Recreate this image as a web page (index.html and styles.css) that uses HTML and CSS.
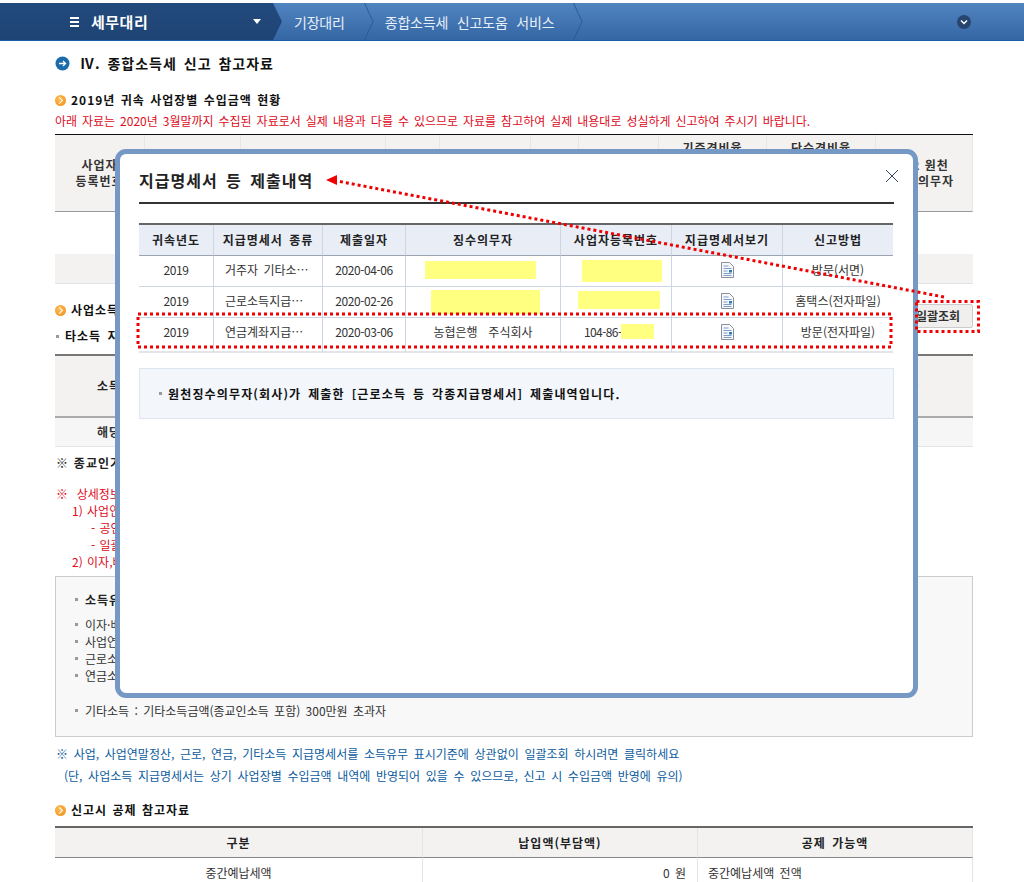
FILE: index.html
```html
<!DOCTYPE html>
<html lang="ko">
<head>
<meta charset="utf-8">
<title>종합소득세 신고도움 서비스</title>
<link rel="stylesheet" href="styles.css">
</head>
<body>
<header class="topbar">
  <div class="brand">
    <svg class="menu-icon" width="9" height="10" viewBox="0 0 9 10"><path d="M0 0h9v2H0zM0 4h9v2H0zM0 8h9v2H0z" fill="#fff"/></svg>
    <span class="brand-name">세무대리</span>
    <svg class="caret" width="8" height="5" viewBox="0 0 8 5"><path d="M0 0h8L4 5z" fill="#fff"/></svg>
  </div>
  <svg class="brand-tip" width="10" height="37" viewBox="0 0 10 37"><defs><linearGradient id="dk" x1="0" y1="0" x2="0" y2="1"><stop offset="0" stop-color="#234a7c"/><stop offset="1" stop-color="#1d4474"/></linearGradient></defs><path d="M0 0l9 18.5L0 37z" fill="url(#dk)"/></svg>
  <span class="crumb crumb-first">기장대리</span>
  <svg class="sep" width="10" height="37" viewBox="0 0 10 37"><path d="M0.5 0l8.5 18.5L0.5 37" fill="none" stroke="#2d5b95"/></svg>
  <span class="crumb">종합소득세 신고도움 서비스</span>
  <svg class="sep" width="10" height="37" viewBox="0 0 10 37"><path d="M0.5 0l8.5 18.5L0.5 37" fill="none" stroke="#2d5b95"/></svg>
  <svg class="more" width="16" height="16" viewBox="0 0 16 16"><circle cx="8" cy="8" r="7" fill="#27466f"/><path d="M5 6.5l3 3 3-3" fill="none" stroke="#fff" stroke-width="1.4"/></svg>
</header>

<main class="page">
  <h1 class="page-title">
    <svg width="15" height="15" viewBox="0 0 15 15"><circle cx="7.5" cy="7.5" r="7" fill="#1c6cab"/><path d="M4 7.5h6M8 5l2.5 2.5L8 10" fill="none" stroke="#fff" stroke-width="1.3"/></svg>
    <span>Ⅳ. 종합소득세 신고 참고자료</span>
  </h1>

  <h2 class="sub-title first-sub"><i class="dot"></i>2019년 귀속 사업장별 수입금액 현황</h2>
  <p class="warn">아래 자료는 2020년 3월말까지 수집된 자료로서 실제 내용과 다를 수 있으므로 자료를 참고하여 실제 내용대로 성실하게 신고하여 주시기 바랍니다.</p>

  <table class="grid t1">
    <colgroup><col class="a1"><col class="a2"><col class="a3"><col class="a4"><col class="a5"><col class="a6"><col class="a7"><col class="a8"><col class="a9"><col class="a10"></colgroup>
    <thead>
      <tr>
        <th>사업자<br>등록번호</th><th></th><th></th><th></th><th></th><th></th><th></th>
        <th class="top">기준경비율</th><th class="top">단순경비율</th><th class="tight">※2 원천<br>징수의무자</th>
      </tr>
    </thead>
    <tbody>
      <tr class="r-blank"><td colspan="10"></td></tr>
      <tr class="r-total"><td colspan="10"></td></tr>
    </tbody>
  </table>

  <div class="section-row">
    <h2 class="sub-title section-title"><i class="dot"></i>사업소득 지급</h2>
    <button class="btn" type="button">일괄조회</button>
  </div>
  <h3 class="bullet-title"><i class="sq"></i>타소득 지급</h3>

  <table class="grid t2">
    <colgroup><col class="b1"><col class="b2"><col class="b3"></colgroup>
    <thead><tr><th>소득구분</th><th></th><th>원천징수의무자</th></tr></thead>
    <tbody><tr><td class="strong">해당없음</td><td></td><td></td></tr></tbody>
  </table>

  <p class="religion">※ 종교인기타소득</p>
  <div class="red-notes">
    <p>※&nbsp; 상세정보</p>
    <p class="lv1">1) 사업연말정산</p>
    <p class="lv2">- 공인인증</p>
    <p class="lv2">- 일괄조회</p>
    <p class="lv1">2) 이자,배당</p>
  </div>

  <section class="info-box">
    <p class="info-head"><i class="sq"></i>소득유무</p>
    <p class="info"><i class="sq"></i>이자·배당</p>
    <p class="info"><i class="sq"></i>사업연말</p>
    <p class="info"><i class="sq"></i>근로소득</p>
    <p class="info"><i class="sq"></i>연금소득</p>
    <p class="info info-last"><i class="sq"></i>기타소득 : 기타소득금액(종교인소득 포함) 300만원 초과자</p>
  </section>

  <div class="blue-notes">
    <p>※ 사업, 사업연말정산, 근로, 연금, 기타소득 지급명세서를 소득유무 표시기준에 상관없이 일괄조회 하시려면 클릭하세요</p>
    <p class="indent">(단, 사업소득 지급명세서는 상기 사업장별 수입금액 내역에 반영되어 있을 수 있으므로, 신고 시 수입금액 반영에 유의)</p>
  </div>

  <h2 class="sub-title last-sub"><i class="dot"></i>신고시 공제 참고자료</h2>
  <table class="grid t3">
    <colgroup><col class="c1"><col class="c2"><col class="c3"></colgroup>
    <thead><tr><th>구분</th><th>납입액(부담액)</th><th>공제 가능액</th></tr></thead>
    <tbody><tr><td>중간예납세액</td><td class="num">0 원</td><td class="lft">중간예납세액 전액</td></tr></tbody>
  </table>
</main>

<div class="modal" role="dialog">
  <div class="modal-head">
    <h2>지급명세서 등 제출내역</h2>
    <svg class="close" width="14" height="14" viewBox="0 0 14 14"><path d="M1 1l12 12M13 1L1 13" fill="none" stroke="#33435f" stroke-width="1"/></svg>
  </div>
  <table class="list">
    <colgroup><col class="m1"><col class="m2"><col class="m3"><col class="m4"><col class="m5"><col class="m6"><col class="m7"></colgroup>
    <thead>
      <tr><th>귀속년도</th><th>지급명세서 종류</th><th>제출일자</th><th>징수의무자</th><th>사업자등록번호</th><th>지급명세서보기</th><th>신고방법</th></tr>
    </thead>
    <tbody>
      <tr><td class="d">2019</td><td class="lft">거주자 기타소…</td><td class="d">2020-04-06</td><td></td><td></td><td><svg class="doc" width="13" height="16" viewBox="0 0 13 16"><path d="M.5.5h8l4 4v11H.5z" fill="#f6f8fb" stroke="#8b8f96"/><path d="M2.5 4h5M2.5 6.500h8M2.500 9h4M2.500 11.500h8M2.500 13.500h8" stroke="#7d9cc6"/><path d="M8 8h3v2.500H8z" fill="#2f7ac0"/></svg></td><td>방문(서면)</td></tr>
      <tr><td class="d">2019</td><td class="lft">근로소득지급…</td><td class="d">2020-02-26</td><td></td><td></td><td><svg class="doc" width="13" height="16" viewBox="0 0 13 16"><path d="M.5.5h8l4 4v11H.5z" fill="#f6f8fb" stroke="#8b8f96"/><path d="M2.5 4h5M2.5 6.500h8M2.500 9h4M2.500 11.500h8M2.500 13.500h8" stroke="#7d9cc6"/><path d="M8 8h3v2.500H8z" fill="#2f7ac0"/></svg></td><td>홈택스(전자파일)</td></tr>
      <tr><td class="d">2019</td><td class="lft">연금계좌지급…</td><td class="d">2020-03-06</td><td>농협은행 &nbsp;주식회사</td><td class="biz">104-86-00000</td><td><svg class="doc" width="13" height="16" viewBox="0 0 13 16"><path d="M.5.5h8l4 4v11H.5z" fill="#f6f8fb" stroke="#8b8f96"/><path d="M2.5 4h5M2.5 6.500h8M2.500 9h4M2.500 11.500h8M2.500 13.500h8" stroke="#7d9cc6"/><path d="M8 8h3v2.500H8z" fill="#2f7ac0"/></svg></td><td>방문(전자파일)</td></tr>
    </tbody>
  </table>
  <div class="modal-note"><i class="sq"></i>원천징수의무자(회사)가 제출한 [근로소득 등 각종지급명세서] 제출내역입니다.</div>
</div>

<svg class="marks" width="1024" height="882" viewBox="0 0 1024 882">
  <g fill="#ffff80">
    <rect x="425" y="261" width="111" height="18"/>
    <rect x="582" y="260" width="80" height="22"/>
    <rect x="431" y="290" width="109" height="24"/>
    <rect x="578" y="291" width="82" height="18"/>
    <rect x="621" y="324" width="33" height="15"/>
  </g>
  <g fill="none" stroke="#f00000" stroke-width="3" stroke-dasharray="3 3">
    <rect x="138" y="314" width="753" height="33"/>
    <rect x="916.500" y="301.500" width="62" height="30"/>
    <path d="M944 297L337 181"/>
  </g>
  <path d="M326 180l11-5v10z" fill="#f00000"/>
</svg>
</body>
</html>
```

FILE: styles.css
```css
* { box-sizing: border-box; }
html { overflow: hidden; }
body {
  margin: 0;
  position: relative;
  background: #fff;
  color: #222;
  font: 12px/16px "Noto Sans CJK KR", "Noto Sans", sans-serif;
  word-spacing: 2px;
}
p, h1, h2, h3 { margin: 0; }
i { font-style: normal; }

/* top bar */
.topbar {
  margin-top: 3px;
  height: 38px;
  display: flex;
  align-items: center;
  background: linear-gradient(#5084bf, #3566a5);
  border-bottom: 1px solid #1d5ca6;
  color: #e8f0f9;
  position: relative;
}
.brand {
  width: 273px;
  height: 37px;
  display: flex;
  align-items: center;
  padding-left: 70px;
  background: linear-gradient(#234a7c, #1d4474);
  color: #fff;
}
.brand-name { margin-left: 12px; font-size: 15px; font-weight: 700; width: 162px; letter-spacing: .5px; }
.menu-icon, .brand-tip, .sep { flex: none; }
.crumb { font-size: 14px; letter-spacing: -.2px; word-spacing: 5px; padding: 0 19px 0 11px; white-space: nowrap; }
.more { margin-left: auto; margin-right: 52px; }

/* page */
.page { padding: 12px 51px 0 55px; }
.page-title {
  display: flex;
  align-items: center;
  gap: 10px;
  font-size: 14px;
  line-height: 20px;
  font-weight: 700;
  color: #111;
  letter-spacing: 1px;
  word-spacing: 2px;
}
.sub-title { font-size: 12px; line-height: 16px; font-weight: 700; color: #111; display: flex; align-items: center; gap: 5px; letter-spacing: 1px; word-spacing: 1px; }
.first-sub { margin-top: 19px; }
.dot {
  position: relative;
  width: 11px;
  height: 11px;
  border-radius: 50%;
  background: radial-gradient(circle at 40% 35%, #ffbe55, #ee8a13);
  flex: none;
}
.dot::after {
  content: "";
  position: absolute;
  left: 2px;
  top: 3.5px;
  width: 4px;
  height: 4px;
  border-top: 1px solid #fff;
  border-right: 1px solid #fff;
  transform: rotate(45deg);
}
.warn { margin-top: 5px; color: #dd0b1b; word-spacing: 1.6px; }

.grid { width: 918px; border-spacing: 0; table-layout: fixed; border-collapse: separate; }
.grid th { background: #f3f2f1; font-weight: 700; color: #333; text-align: center; padding: 0; letter-spacing: 1px; }
.grid td { text-align: center; padding: 0; }
.t1 { margin-top: 5px; border-top: 1px solid #111; }
.t1 th { height: 77px; border-bottom: 1px solid #999; border-right: 1px solid #e6e6e6; }
.t1 th.top { vertical-align: top; padding-top: 5px; }
.t1 th.tight { word-spacing: 0; }
.a1 { width: 90px; } .a2 { width: 96px; } .a3 { width: 145px; } .a4 { width: 54px; } .a5 { width: 91px; }
.a6 { width: 48px; } .a7 { width: 80px; } .a8 { width: 108px; } .a9 { width: 109px; } .a10 { width: 97px; }
.r-blank td { height: 42px; }
.r-total td { height: 30px; background: #f3f2f1; border-bottom: 1px solid #e4e4e4; }

.section-row { margin-top: 20px; height: 24px; display: flex; align-items: flex-start; justify-content: space-between; }
.section-title { line-height: 12px; }
.btn {
  width: 59px;
  height: 24px;
  padding: 0 11px 0 0;
  background: #f0efee;
  border: 1px solid #ccc;
  border-radius: 2px;
  font: 700 12px/22px "Noto Sans CJK KR", "Noto Sans", sans-serif;
  color: #333;
}
.bullet-title { font-size: 12px; line-height: 16px; font-weight: 700; color: #111; display: flex; align-items: center; gap: 6px; letter-spacing: 1px; }
.sq { width: 3px; height: 3px; background: #999; flex: none; display: inline-block; }
.bullet-title .sq { margin-left: 1px; }

.t2 { margin-top: 10px; border-top: 2px solid #777; }
.t2 th { height: 62px; border-bottom: 2px solid #aaa; color: #222; }
.t2 td { height: 29px; background: #f6f6f6; border-bottom: 1px solid #e4e4e4; }
.t2 .strong { font-weight: 700; color: #333; letter-spacing: 1px; }
.b1 { width: 132px; } .b2 { width: 594px; } .b3 { width: 192px; }

.religion { margin-top: 8px; font-weight: 700; color: #222; padding-left: 1px; letter-spacing: 1px; word-spacing: .5px; }
.red-notes { margin-top: 14px; color: #dd0b1b; padding-left: 1px; word-spacing: 1px; }
.red-notes p { line-height: 17px; }
.red-notes .lv1 { padding-left: 16px; }
.red-notes .lv2 { padding-left: 35px; }

.info-box {
  margin-top: 6px;
  height: 161px;
  background: #f8f8f8;
  border: 1px solid #ccc;
  padding: 14px 0 0 19px;
}
.info-box p { display: flex; align-items: center; gap: 7px; line-height: 17px; color: #333; }
.info-box .info-head { font-weight: 700; color: #222; margin-bottom: 8px; letter-spacing: 1px; }
.info-box .info-last { margin-top: 18px; }

.blue-notes { margin-top: 6px; color: #0c5c9e; word-spacing: 2.3px; }
.blue-notes p { line-height: 22px; }
.blue-notes p:first-child { padding-left: 1px; }
.blue-notes .indent { padding-left: 9px; }

.last-sub { margin-top: 15px; }
.t3 { margin-top: 8px; border-top: 2px solid #666; }
.t3 th { height: 30px; border-bottom: 1px solid #888; border-right: 1px solid #e4e4e4; color: #222; }
.t3 td { height: 30px; border-right: 1px solid #e4e4e4; color: #333; }
.t3 .num { text-align: right; padding-right: 11px; }
.t3 .lft { text-align: left; padding-left: 10px; }
.c1 { width: 368px; } .c2 { width: 275px; } .c3 { width: 275px; }

/* modal */
.modal {
  position: absolute;
  left: 115px;
  top: 149px;
  width: 803px;
  height: 549px;
  background: #fff;
  border: 5px solid #7698c4;
  border-radius: 11px;
  padding: 0 19px;
  display: flex;
  flex-direction: column;
}
.modal-head {
  height: 50px;
  border-bottom: 2px solid #333;
  display: flex;
  align-items: center;
  justify-content: space-between;
  padding: 3px 0 0;
}
.modal-head h2 { font-size: 16px; line-height: 24px; font-weight: 700; color: #222; word-spacing: 3px; letter-spacing: 1px; }
.close { margin: -7px -5px 0 0; }
.list { margin-top: 19px; width: 754px; table-layout: fixed; border-collapse: separate; border-spacing: 0; border-top: 2px solid #666; }
.list th { height: 31px; background: #e9eef6; border-bottom: 1px solid #9aa4b3; border-right: 1px solid #ccd5e2; color: #222; font-weight: 700; padding: 0; letter-spacing: 1px; }
.list td { height: 31px; text-align: center; border-bottom: 1px solid #ccd5e2; border-right: 1px solid #ccd5e2; color: #333; padding: 0 0 2px; }
.list tr:last-child td { height: 35px; padding-bottom: 6px; border-bottom: 2px solid #e3e5ea; }
.list th:last-child, .list td:last-child { border-right: 0; }
.list .lft { text-align: left; padding-left: 11px; }
.list .d { letter-spacing: -.4px; }
.list .biz { text-align: left; padding-left: 23px; letter-spacing: -.6px; }
.doc { display: block; margin: 0 auto; }
.m1 { width: 75px; } .m2 { width: 109px; } .m3 { width: 83px; } .m4 { width: 155px; } .m5 { width: 111px; } .m6 { width: 111px; } .m7 { width: 110px; }
.modal-note {
  margin-top: 15px;
  height: 51px;
  background: #f3f6fb;
  border: 1px solid #dde5ee;
  display: flex;
  align-items: center;
  gap: 6px;
  padding-left: 19px;
  font-weight: 700;
  color: #111;
  letter-spacing: 1.15px;
  word-spacing: 2.4px;
}

.marks { position: absolute; left: 0; top: 0; pointer-events: none; }
```
